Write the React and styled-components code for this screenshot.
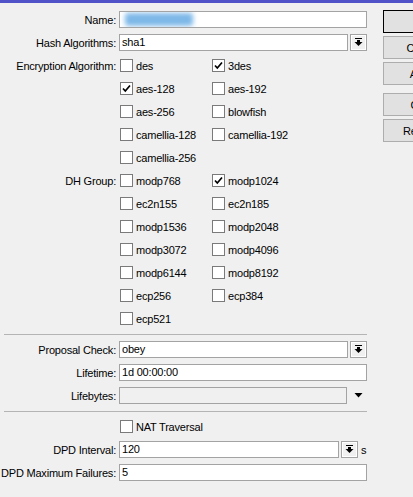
import React from "react";
import styled, { createGlobalStyle } from "styled-components";

const GlobalStyle = createGlobalStyle`
  html, body {
    margin: 0;
    padding: 0;
    background: #f0f0f0;
    overflow: hidden;
  }
  body {
    font-family: "Liberation Sans", Arial, sans-serif;
    font-size: 11px;
    letter-spacing: -0.2px;
    color: #000;
  }
`;

const TitleStrip = styled.div`
  height: 3px;
  background: #5252c8;
`;

const Window = styled.div`
  display: flex;
  width: 413px;
  height: 494px;
  overflow: hidden;
`;

const Form = styled.div`
  width: 370px;
  flex-shrink: 0;
  padding-top: 5px;
`;

const Row = styled.div`
  display: grid;
  grid-template-columns: 116px 1fr;
  column-gap: 3px;
  height: 23px;
  align-items: center;
  padding-right: 3px;
`;

const Label = styled.div`
  text-align: right;
  white-space: nowrap;
`;

const Field = styled.div`
  display: flex;
  align-items: center;
  gap: ${(p) => p.$gap ?? 2}px;
`;

const TextBox = styled.div`
  box-sizing: border-box;
  height: 17px;
  flex: ${(p) => (p.$width ? "none" : "1")};
  width: ${(p) => (p.$width ? `${p.$width}px` : "auto")};
  border: 1px solid #a3a3a3;
  background: ${(p) => (p.$disabled ? "#f0f0f0" : "#fff")};
  padding: 0 0 0 2px;
  line-height: 15px;
  display: flex;
  align-items: center;
  overflow: hidden;
`;

const Redacted = styled.div`
  width: 68px;
  height: 13px;
  margin-left: 3px;
  background: #7db8e8;
  border-radius: 3px;
  filter: blur(2.5px);
`;

const DropButton = styled.div`
  box-sizing: border-box;
  width: 17px;
  height: 17px;
  border: 1px solid #a3a3a3;
  box-shadow: inset 0 0 0 1px #fff;
  background: #f0f0f0;
  display: flex;
  align-items: center;
  justify-content: center;
  flex: none;
`;

const Arrow = styled.div`
  width: 17px;
  display: flex;
  justify-content: center;
  margin-left: 1px;
`;

const Unit = styled.span`
  margin-left: 1px;
`;

const Checks = styled.div`
  display: grid;
  grid-template-columns: 92px 92px;
  padding-left: 1px;
`;

const CheckItem = styled.label`
  display: flex;
  align-items: center;
  gap: 3px;
  white-space: nowrap;
`;

const Box = styled.span`
  box-sizing: border-box;
  width: 13px;
  height: 13px;
  border: 1px solid #7a7a7a;
  background: #fff;
  display: flex;
  align-items: center;
  justify-content: center;
  flex: none;
`;

const Separator = styled.div`
  height: 1px;
  background: #b4b4b4;
  margin: 4px 3px 3px 4px;
`;

const Buttons = styled.div`
  display: flex;
  flex-direction: column;
  padding-top: 7px;
  margin-left: 13px;
`;

const Button = styled.div`
  box-sizing: border-box;
  width: 80px;
  height: 23px;
  margin-bottom: ${(p) => p.$after ?? 3}px;
  border: 1px solid ${(p) => (p.$default ? "#000" : "#adadad")};
  background: #e1e1e1;
  display: flex;
  align-items: center;
  justify-content: center;
  flex: none;
`;

const DropIcon = () => (
  <svg width="9" height="9" viewBox="0 0 9 9">
    <rect x="1" y="0" width="7" height="1" fill="#000" />
    <rect x="3" y="2" width="3" height="2" fill="#000" />
    <polygon points="0.5,4 8.5,4 4.5,8" fill="#000" />
  </svg>
);

const DownTriangle = () => (
  <svg width="9" height="5" viewBox="0 0 9 5">
    <polygon points="0.5,0 8.5,0 4.5,4.5" fill="#000" />
  </svg>
);

const Tick = () => (
  <svg width="9" height="9" viewBox="0 0 9 9">
    <path d="M1 4.5 L3.3 7 L8 1.5" stroke="#000" strokeWidth="1.7" fill="none" />
  </svg>
);

function Check({ label, checked }) {
  return (
    <CheckItem>
      <Box>{checked && <Tick />}</Box>
      <span>{label}</span>
    </CheckItem>
  );
}

const encryption = [
  [["des"], ["3des", true]],
  [["aes-128", true], ["aes-192"]],
  [["aes-256"], ["blowfish"]],
  [["camellia-128"], ["camellia-192"]],
  [["camellia-256"]],
];

const dhGroups = [
  [["modp768"], ["modp1024", true]],
  [["ec2n155"], ["ec2n185"]],
  [["modp1536"], ["modp2048"]],
  [["modp3072"], ["modp4096"]],
  [["modp6144"], ["modp8192"]],
  [["ecp256"], ["ecp384"]],
  [["ecp521"]],
];

function CheckGroup({ title, rows }) {
  return rows.map((pair, i) => (
    <Row key={i}>
      <Label>{i === 0 ? title : ""}</Label>
      <Checks>
        {pair.map(([name, on]) => (
          <Check key={name} label={name} checked={on} />
        ))}
      </Checks>
    </Row>
  ));
}

export default function App() {
  return (
    <>
      <GlobalStyle />
      <TitleStrip />
      <Window>
        <Form>
          <Row>
            <Label>Name:</Label>
            <Field>
              <TextBox>
                <Redacted />
              </TextBox>
            </Field>
          </Row>
          <Row>
            <Label>Hash Algorithms:</Label>
            <Field>
              <TextBox>sha1</TextBox>
              <DropButton>
                <DropIcon />
              </DropButton>
            </Field>
          </Row>
          <CheckGroup title="Encryption Algorithm:" rows={encryption} />
          <CheckGroup title="DH Group:" rows={dhGroups} />

          <Separator />

          <Row>
            <Label>Proposal Check:</Label>
            <Field>
              <TextBox>obey</TextBox>
              <DropButton>
                <DropIcon />
              </DropButton>
            </Field>
          </Row>
          <Row>
            <Label>Lifetime:</Label>
            <Field>
              <TextBox>1d 00:00:00</TextBox>
            </Field>
          </Row>
          <Row>
            <Label>Lifebytes:</Label>
            <Field>
              <TextBox $disabled />
              <Arrow>
                <DownTriangle />
              </Arrow>
            </Field>
          </Row>

          <Separator />

          <Row>
            <Label />
            <Checks>
              <Check label="NAT Traversal" />
            </Checks>
          </Row>
          <Row>
            <Label>DPD Interval:</Label>
            <Field>
              <TextBox $width={220}>120</TextBox>
              <DropButton>
                <DropIcon />
              </DropButton>
              <Unit>s</Unit>
            </Field>
          </Row>
          <Row>
            <Label>DPD Maximum Failures:</Label>
            <Field>
              <TextBox>5</TextBox>
            </Field>
          </Row>
        </Form>

        <Buttons>
          <Button $default>OK</Button>
          <Button>Cancel</Button>
          <Button $after={8}>Apply</Button>
          <Button>Copy</Button>
          <Button>Remove</Button>
        </Buttons>
      </Window>
    </>
  );
}
